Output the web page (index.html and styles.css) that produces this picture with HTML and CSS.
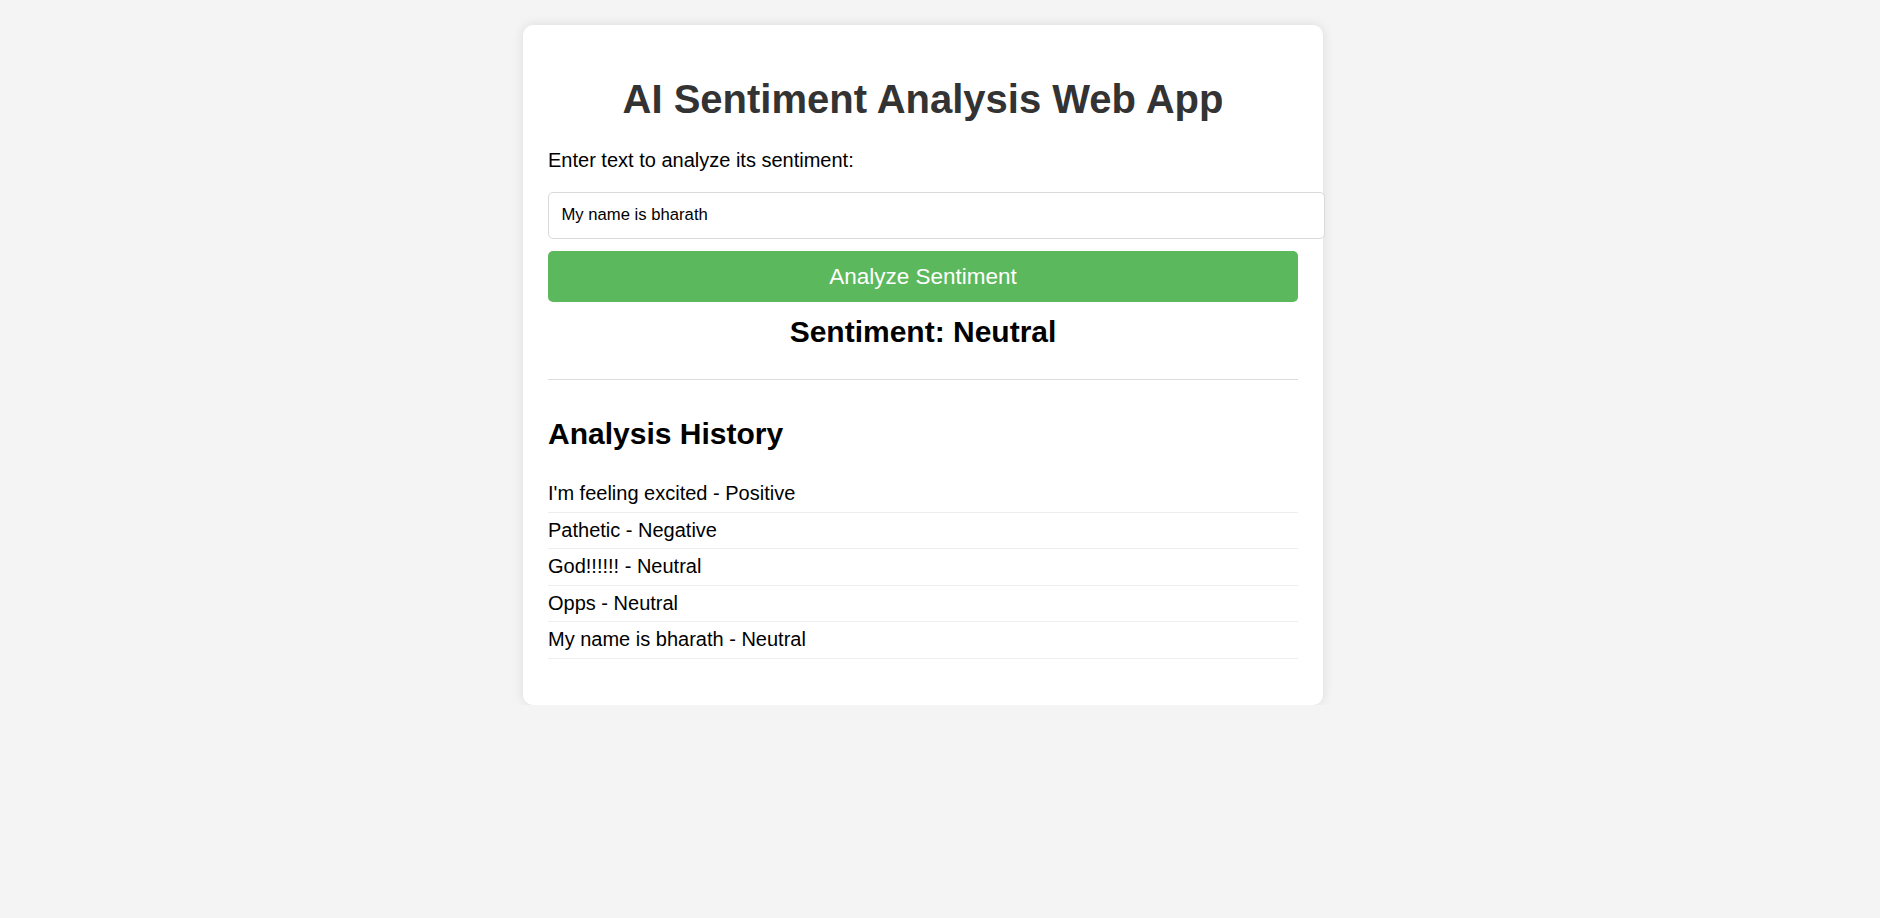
FILE: index.html
```html
<!DOCTYPE html>
<html lang="en">
<head>
<meta charset="UTF-8">
<title>AI Sentiment Analysis Web App</title>
<link rel="stylesheet" href="styles.css">
</head>
<body>
  <div class="page">
    <main class="card">
      <h1 class="title">AI Sentiment Analysis Web App</h1>
      <p class="prompt">Enter text to analyze its sentiment:</p>
      <input class="text-input" type="text" value="My name is bharath">
      <button class="analyze-btn" type="button">Analyze Sentiment</button>
      <h2 class="result">Sentiment: Neutral</h2>
      <section class="history">
        <h2 class="history-title">Analysis History</h2>
        <ul class="history-list">
          <li class="history-item">I'm feeling excited - Positive</li>
          <li class="history-item">Pathetic - Negative</li>
          <li class="history-item">God!!!!!! - Neutral</li>
          <li class="history-item">Opps - Neutral</li>
          <li class="history-item">My name is bharath - Neutral</li>
        </ul>
      </section>
    </main>
  </div>
</body>
</html>
```

FILE: styles.css
```css
html, body {
  margin: 0;
  padding: 0;
}

body {
  background: #f4f4f4;
  font-family: "Liberation Sans", Arial, sans-serif;
  font-size: 20px;
  color: #000;
}

.page {
  padding: 25px 34px 0 0;
}

.card {
  width: 750px;
  margin: 0 auto;
  padding: 25px;
  background: #fff;
  border-radius: 10px;
  box-shadow: 0 0 12px rgba(0, 0, 0, 0.1);
}

.title {
  font-size: 40px;
  font-weight: bold;
  color: #333;
  text-align: center;
  margin: 26.8px 0;
}

.prompt {
  margin: 20px 0;
}

.text-input {
  display: block;
  width: 750px;
  padding: 12.5px;
  border: 1px solid #d9d9d9;
  border-radius: 5px;
  font-family: "Liberation Sans", Arial, sans-serif;
  font-size: 16.67px;
  color: #000;
  background: #fff;
  outline: none;
}

.analyze-btn {
  display: block;
  width: 100%;
  margin-top: 12.5px;
  padding: 12.5px;
  border: none;
  border-radius: 5px;
  background: #5cb85c;
  color: #fff;
  font-family: "Liberation Sans", Arial, sans-serif;
  font-size: 22.5px;
  cursor: pointer;
}

.result {
  font-size: 30px;
  text-align: center;
  margin: 12.5px 0 0;
}

.history {
  margin-top: 30px;
  border-top: 1px solid #ddd;
  padding-top: 12.5px;
}

.history-title {
  font-size: 30px;
  margin: 25px 0;
}

.history-list {
  list-style: none;
  margin: 0 0 21px;
  padding: 0;
}

.history-item {
  padding: 6.25px 0;
  border-bottom: 1px solid #eee;
}
```
